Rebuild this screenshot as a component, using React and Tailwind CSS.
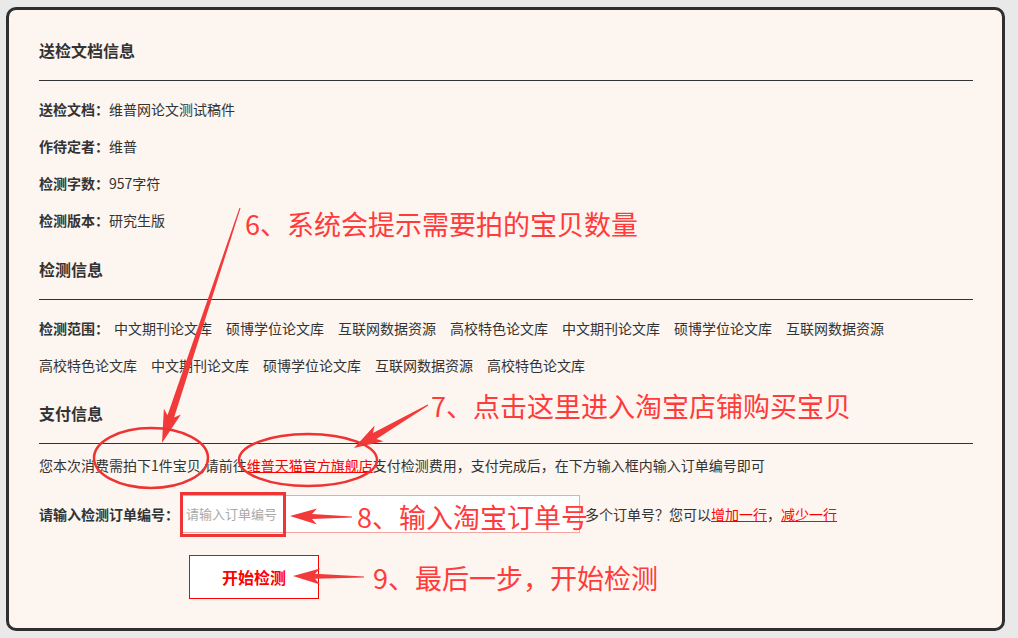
const FONT = { fontFamily: '"Noto Sans CJK SC", "Noto Sans", sans-serif' }

const RANGES = [
  '中文期刊论文库', '硕博学位论文库', '互联网数据资源', '高校特色论文库',
  '中文期刊论文库', '硕博学位论文库', '互联网数据资源', '高校特色论文库',
  '中文期刊论文库', '硕博学位论文库', '互联网数据资源', '高校特色论文库',
]

// tapered arrow from tail (x1,y1) to tip (x2,y2)
function arrow(x1, y1, x2, y2, w0, w1, L, H) {
  const dx = x2 - x1
  const dy = y2 - y1
  const len = Math.hypot(dx, dy)
  const ux = dx / len
  const uy = dy / len
  const nx = -uy
  const ny = ux
  const bx = x2 - ux * L
  const by = y2 - uy * L
  const cx = bx - ux * 5
  const cy = by - uy * 5
  const p = [
    [x1 + nx * w0 / 2, y1 + ny * w0 / 2],
    [bx + nx * w1 / 2, by + ny * w1 / 2],
    [cx + nx * H, cy + ny * H],
    [x2, y2],
    [cx - nx * H, cy - ny * H],
    [bx - nx * w1 / 2, by - ny * w1 / 2],
    [x1 - nx * w0 / 2, y1 - ny * w0 / 2],
  ]
  return p.map(([a, b]) => `${a.toFixed(1)},${b.toFixed(1)}`).join(' ')
}

function Heading({ children, className = '' }) {
  return (
    <div className={className}>
      <div className="h-[30px] leading-[30px] text-[16px] font-bold text-[#333]">{children}</div>
      <div className="mt-[15px] h-px bg-[#333]"></div>
    </div>
  )
}

function Row({ label, value }) {
  return (
    <div className="h-[37px] leading-[37px] text-[14px] text-[#333]">
      <span className="font-bold">{label}：</span>
      {value}
    </div>
  )
}

export default function App() {
  return (
    <div className="relative w-[1018px] h-[638px] overflow-hidden bg-[#e9e9e9] pt-[7px] pl-[6px]" style={FONT}>
      {/* Card */}
      <div className="w-[999px] h-[624px] rounded-[10px] border-[3px] border-[#2f2f2f] bg-[#fdf5ef] pl-[30px] pr-[29px] pt-[25px]">
        <Heading>送检文档信息</Heading>
        <div className="mt-[10px]">
          <Row label="送检文档" value="维普网论文测试稿件" />
          <Row label="作待定者" value="维普" />
          <Row label="检测字数" value="957字符" />
          <Row label="检测版本" value="研究生版" />
        </div>

        <Heading className="mt-[15px]">检测信息</Heading>
        <div className="mt-[10px] flex flex-wrap text-[14px] text-[#333]">
          <span className="h-[37px] leading-[37px] font-bold mr-[5px]">检测范围：</span>
          {RANGES.map((r, i) => (
            <span key={i} className="h-[37px] leading-[37px] mr-[14px]">{r}</span>
          ))}
        </div>

        <Heading className="mt-[14px]">支付信息</Heading>
        <div className="mt-[6px] h-[30px] leading-[30px] text-[14px] text-[#333]">
          您本次消费需拍下1件宝贝,请前往<span className="text-[#ff0000] underline">维普天猫官方旗舰店</span>支付检测费用，支付完成后，在下方输入框内输入订单编号即可
        </div>

        <div className="mt-[14px] flex items-center h-[40px] text-[14px] text-[#333]">
          <span className="w-[141px] font-bold">请输入检测订单编号：</span>
          <div className="w-[400px] h-[38px] border border-[#f5a3a3] bg-white pl-[5px] flex items-center text-[13px] text-[#a9a9a9]">
            请输入订单编号
          </div>
          <span className="ml-[5px]">多个订单号？您可以</span>
          <span className="text-[#ff0000] underline">增加一行</span>
          <span>，</span>
          <span className="text-[#ff0000] underline">减少一行</span>
        </div>

        <div className="mt-[21px] ml-[150px] w-[130px] h-[44px] border border-[#ff0000] bg-white flex items-center justify-center text-[16px] font-bold text-[#ff0000]">
          开始检测
        </div>
      </div>

      {/* Annotations */}
      <svg className="absolute left-0 top-0" width="1018" height="638" viewBox="0 0 1018 638">
        <polygon points={arrow(240, 208, 162, 443, 1, 7, 28, 9)} fill="#f23a3a" />
        <polygon points={arrow(428, 405, 354, 448, 1, 7, 24, 9)} fill="#f23a3a" />
        <polygon points={arrow(352, 517, 290, 516, 1, 5, 22, 8)} fill="#f23a3a" />
        <polygon points={arrow(364, 577, 293, 576, 1, 5, 22, 8)} fill="#f23a3a" />
        <ellipse cx="151" cy="458" rx="57" ry="30" fill="none" stroke="#ee3333" strokeWidth="2.5" />
        <ellipse cx="308" cy="460" rx="69" ry="26" fill="none" stroke="#ee3333" strokeWidth="2.5" />
        <rect x="181.5" y="493.5" width="103" height="42" fill="none" stroke="#f03535" strokeWidth="3" />
      </svg>
      <span className="absolute left-[245px] top-[209px] leading-[30px] text-[27px] text-[#ff3b3b] whitespace-nowrap">6、系统会提示需要拍的宝贝数量</span>
      <span className="absolute left-[431px] top-[391px] leading-[30px] text-[27px] text-[#ff3b3b] whitespace-nowrap">7、点击这里进入淘宝店铺购买宝贝</span>
      <span className="absolute left-[357px] top-[502px] leading-[30px] text-[27px] text-[#ff3b3b] whitespace-nowrap">8、输入淘宝订单号</span>
      <span className="absolute left-[373px] top-[563px] leading-[30px] text-[27px] text-[#ff3b3b] whitespace-nowrap">9、最后一步，开始检测</span>
    </div>
  )
}
